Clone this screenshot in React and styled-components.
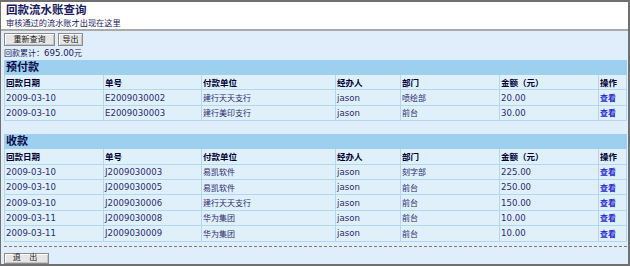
import React from 'react';
import styled, { createGlobalStyle } from 'styled-components';

const GlobalStyle = createGlobalStyle`
  html, body {
    margin: 0;
    padding: 0;
    background: #fff;
  }
  body {
    font-family: "DejaVu Sans", "Noto Sans CJK SC", sans-serif;
  }
`;

const Frame = styled.div`
  width: 630px;
  height: 266px;
  box-sizing: border-box;
  border: 2px solid #707070;
  border-left-width: 1px;
  background: #dfeefa;
  display: flex;
  flex-direction: column;
  overflow: hidden;
`;

const Header = styled.div`
  height: 26px;
  padding: 1px 0 0 5px;
  background: #fff;
  border-bottom: 2px solid #a9a9a9;
  box-sizing: content-box;
  color: #1b1b5e;
`;

const Title = styled.div`
  font-size: 11.5px;
  font-weight: bold;
  line-height: 14px;
`;

const Subtitle = styled.div`
  font-size: 8.2px;
  line-height: 10px;
  margin-top: 1px;
`;

const Body = styled.div`
  flex: 1;
  display: flex;
  flex-direction: column;
  padding: 2px 1px 0 3px;
`;

const Toolbar = styled.div`
  display: flex;
  align-items: flex-start;
  gap: 3px;
  height: 14px;
`;

const Button = styled.button`
  box-sizing: border-box;
  display: flex;
  align-items: center;
  justify-content: center;
  width: ${({ $w }) => $w}px;
  height: ${({ $h }) => $h || 13}px;
  padding: 0;
  font-family: "DejaVu Sans", "Noto Sans CJK SC", sans-serif;
  font-size: 8px;
  line-height: 1;
  color: #1a1a1a;
  background: #e6e6e6;
  border: 1px solid #8c8c8c;
  box-shadow: inset 1px 1px 0 #fff, inset -1px -1px 0 #c4c4c4;
  letter-spacing: ${({ $spaced }) => ($spaced ? '3px' : '0')};
`;

const Total = styled.div`
  height: 13px;
  line-height: 13px;
  font-size: 8px;
  color: #1b1b5e;
`;

const Amount = styled.span`
  font-size: 8.6px;
`;

const Section = styled.div`
  margin-top: ${({ $top }) => $top}px;
`;

const Band = styled.div`
  height: 15px;
  line-height: 15px;
  padding-left: 2px;
  background: #9dcfee;
  color: #0c0c4c;
  font-size: 11px;
  font-weight: bold;
`;

const Table = styled.div`
  display: grid;
  grid-template-columns: 98px 97px 133px 64px 98px 98px 27px;
  grid-auto-rows: 14.4px;
  gap: 1px;
  padding: 0 1px 1px 1px;
  background: #b0d8f2;
`;

const Cell = styled.div`
  display: flex;
  align-items: center;
  padding: 0 1px;
  background: #dff0fb;
  color: #2b2b70;
  font-size: ${({ $cjk }) => ($cjk ? '8px' : '8.6px')};
  white-space: nowrap;
  overflow: hidden;
`;

const HeadCell = styled(Cell)`
  font-size: 8.5px;
  font-weight: bold;
  color: #000033;
`;

const Link = styled.a`
  color: #2a2ad0;
  font-size: 8px;
  font-weight: bold;
  text-decoration: none;
`;

const Footer = styled.div`
  display: flex;
  margin-top: 4px;
  padding-top: 6px;
  border-top: 1px dashed #7a7a7a;
`;

const columns = ['回款日期', '单号', '付款单位', '经办人', '部门', '金额（元）', '操作'];

const prepaid = [
  ['2009-03-10', 'E2009030002', '建行天天支行', 'jason', '喷绘部', '20.00'],
  ['2009-03-10', 'E2009030003', '建行美印支行', 'jason', '前台', '30.00'],
];

const received = [
  ['2009-03-10', 'J2009030003', '易凯软件', 'jason', '刻字部', '225.00'],
  ['2009-03-10', 'J2009030005', '易凯软件', 'jason', '前台', '250.00'],
  ['2009-03-10', 'J2009030006', '建行天天支行', 'jason', '前台', '150.00'],
  ['2009-03-11', 'J2009030008', '华为集团', 'jason', '前台', '10.00'],
  ['2009-03-11', 'J2009030009', '华为集团', 'jason', '前台', '10.00'],
];

const LedgerTable = ({ title, rows, top }) => (
  <Section $top={top}>
    <Band>{title}</Band>
    <Table>
      {columns.map((c) => (
        <HeadCell key={c}>{c}</HeadCell>
      ))}
      {rows.map((r) => (
        <React.Fragment key={r[1]}>
          <Cell>{r[0]}</Cell>
          <Cell>{r[1]}</Cell>
          <Cell $cjk>{r[2]}</Cell>
          <Cell>{r[3]}</Cell>
          <Cell $cjk>{r[4]}</Cell>
          <Cell>{r[5]}</Cell>
          <Cell>
            <Link href="#">查看</Link>
          </Cell>
        </React.Fragment>
      ))}
    </Table>
  </Section>
);

const App = () => {
  return (
    <>
      <GlobalStyle />
      <Frame>
        <Header>
          <Title>回款流水账查询</Title>
          <Subtitle>审核通过的流水账才出现在这里</Subtitle>
        </Header>
        <Body>
          <Toolbar>
            <Button $w={51}>重新查询</Button>
            <Button $w={25}>导出</Button>
          </Toolbar>
          <Total>
            回款累计：<Amount>695.00</Amount>元
          </Total>
          <LedgerTable title="预付款" rows={prepaid} top={0} />
          <LedgerTable title="收款" rows={received} top={13} />
          <Footer>
            <Button $w={45} $h={11} $spaced>
              退 出
            </Button>
          </Footer>
        </Body>
      </Frame>
    </>
  );
};

export default App;
